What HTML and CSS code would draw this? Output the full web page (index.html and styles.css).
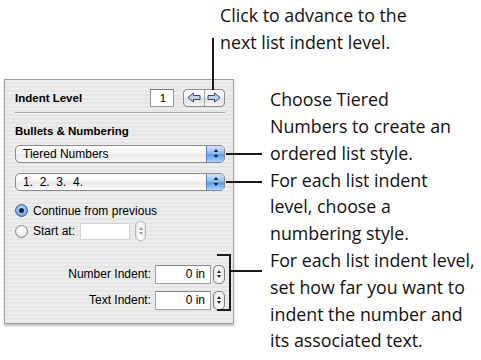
FILE: index.html
```html
<!DOCTYPE html>
<html>
<head>
<meta charset="utf-8">
<link rel="stylesheet" href="styles.css">
</head>
<body>
<div class="page">
  <p class="callout top-callout">Click to advance to the<br>next list indent level.</p>
  <div class="main">
    <div class="panel">
      <div class="row indent-row">
        <span class="bold-label">Indent Level</span>
        <span class="num-field">1</span>
        <span class="seg">
          <span class="seg-btn">
            <svg width="14" height="11" viewBox="0 0 14 11"><path d="M1 5.5 L6.5 1 L6.5 3.5 L13 3.5 L13 7.5 L6.5 7.5 L6.5 10 Z" fill="#b9d3f0" stroke="#3f4a5c" stroke-width="1" stroke-linejoin="round"/></svg>
          </span>
          <span class="seg-btn">
            <svg width="14" height="11" viewBox="0 0 14 11"><path d="M13 5.5 L7.5 1 L7.5 3.5 L1 3.5 L1 7.5 L7.5 7.5 L7.5 10 Z" fill="#b9d3f0" stroke="#3f4a5c" stroke-width="1" stroke-linejoin="round"/></svg>
          </span>
        </span>
      </div>
      <div class="divider"></div>
      <div class="bold-label section-title">Bullets &amp; Numbering</div>
      <div class="popup">
        <span class="popup-text">Tiered Numbers</span>
        <span class="popup-arrows"><svg width="8" height="11" viewBox="0 0 8 11"><path d="M4 1 L6.5 4 L1.5 4 Z M4 10 L6.5 7 L1.5 7 Z" fill="#1c2838"/></svg></span>
      </div>
      <div class="popup popup-second">
        <span class="popup-text">1.&nbsp; 2.&nbsp; 3.&nbsp; 4.</span>
        <span class="popup-arrows"><svg width="8" height="11" viewBox="0 0 8 11"><path d="M4 1 L6.5 4 L1.5 4 Z M4 10 L6.5 7 L1.5 7 Z" fill="#1c2838"/></svg></span>
      </div>
      <div class="radio-row first-radio">
        <span class="radio on"><span class="dot"></span></span>
        <span class="label">Continue from previous</span>
      </div>
      <div class="radio-row second-radio">
        <span class="radio"></span>
        <span class="label">Start at:</span>
        <span class="field start-field"></span>
        <span class="stepper disabled"><svg width="6" height="12" viewBox="0 0 6 12"><path d="M3 2 L5 5 L1 5 Z M3 10 L5 7 L1 7 Z" fill="#9a9a9a"/></svg></span>
      </div>
      <div class="indent-grid">
        <span class="label right">Number Indent:</span>
        <span class="field value-field">0 in</span>
        <span class="stepper"><svg width="6" height="12" viewBox="0 0 6 12"><path d="M3 2 L5 5 L1 5 Z M3 10 L5 7 L1 7 Z" fill="#222"/></svg></span>
        <span class="label right">Text Indent:</span>
        <span class="field value-field">0 in</span>
        <span class="stepper"><svg width="6" height="12" viewBox="0 0 6 12"><path d="M3 2 L5 5 L1 5 Z M3 10 L5 7 L1 7 Z" fill="#222"/></svg></span>
      </div>
    </div>
    <div class="notes">
      <p class="callout">Choose Tiered<br>Numbers to create an<br>ordered list style.</p>
      <p class="callout">For each list indent<br>level, choose a<br>numbering style.</p>
      <p class="callout">For each list indent level,<br>set how far you want to<br>indent the number and<br>its associated text.</p>
    </div>
  </div>
  <span class="leader v-top"></span>
  <span class="leader h-one"></span>
  <span class="leader h-two"></span>
  <span class="bracket"></span>
  <span class="leader h-three"></span>
</div>
</body>
</html>
```
FILE: styles.css
```css
html, body {
  margin: 0;
  padding: 0;
  background: #ffffff;
}
.page {
  position: relative;
  width: 481px;
  height: 360px;
  overflow: hidden;
}
.callout {
  margin: 0;
  font-family: "Open Sans", "Liberation Sans", sans-serif;
  font-size: 17.8px;
  line-height: 26.8px;
  color: #111;
}
.top-callout {
  padding: 2px 0 0 220px;
}
.main {
  display: flex;
  align-items: flex-start;
  margin-top: 23px;
}
.panel {
  box-sizing: border-box;
  width: 230px;
  margin-left: 4px;
  padding: 9px 8px 13px 10px;
  border: 1px solid #a2a2a2;
  background: repeating-linear-gradient(to bottom, #ececec 0, #ececec 2px, #e5e5e5 2px, #e5e5e5 4px);
  box-shadow: 0 2px 2px rgba(0,0,0,0.25);
  font-family: "Liberation Sans", Arial, sans-serif;
  font-size: 12px;
  color: #000;
}
.notes {
  margin-left: 36px;
  padding-top: 7.7px;
}
.row {
  display: flex;
  align-items: center;
}
.bold-label {
  font-weight: bold;
  font-size: 11.5px;
}
.indent-row {
  height: 18px;
}
.indent-row .bold-label {
  flex: 1;
}
.num-field {
  box-sizing: border-box;
  width: 24px;
  height: 18px;
  background: #fff;
  border: 1px solid #9a9a9a;
  border-top-color: #777;
  font-size: 11.5px;
  line-height: 16px;
  text-align: center;
  padding-left: 2px;
}
.seg {
  display: flex;
  margin-left: 9px;
  box-sizing: border-box;
  width: 42px;
  height: 18px;
  border: 1px solid #8c8c8c;
  border-radius: 4px;
  background: linear-gradient(to bottom, #ffffff 0%, #f2f2f2 50%, #dedede 51%, #f4f4f4 100%);
  overflow: hidden;
}
.seg-btn {
  flex: 1;
  display: flex;
  align-items: center;
  justify-content: center;
}
.seg-btn + .seg-btn {
  border-left: 1px solid #a8a8a8;
}
.divider {
  height: 1px;
  background: #a9a9a9;
  border-bottom: 1px solid #f6f6f6;
  margin: 5px 0 0 0;
}
.section-title {
  margin-top: 10px;
  line-height: 14px;
}
.popup {
  display: flex;
  box-sizing: border-box;
  height: 18px;
  margin-top: 7px;
  border: 1px solid #8a8a8a;
  border-radius: 5px;
  background: linear-gradient(to bottom, #ffffff 0%, #f6f6f6 45%, #e8e8e8 55%, #fbfbfb 100%);
  overflow: hidden;
}
.popup-second {
  margin-top: 10px;
}
.popup-text {
  flex: 1;
  padding-left: 7px;
  line-height: 16px;
}
.popup-arrows {
  width: 17px;
  display: flex;
  align-items: center;
  justify-content: center;
  border-left: 1px solid #5c83b4;
  background: linear-gradient(to bottom, #cfe4fa 0%, #8ebef0 45%, #5b9ae6 55%, #a9d4fb 100%);
}
.radio-row {
  display: flex;
  align-items: center;
}
.first-radio {
  margin-top: 13px;
  height: 14px;
}
.second-radio {
  margin-top: 3px;
  height: 21px;
}
.radio {
  box-sizing: border-box;
  width: 13px;
  height: 13px;
  border-radius: 50%;
  border: 1px solid #8a8a8a;
  background: radial-gradient(circle at 50% 35%, #ffffff 0%, #f0f0f0 50%, #cfcfcf 100%);
  display: flex;
  align-items: center;
  justify-content: center;
  margin-right: 5px;
}
.radio.on {
  border-color: #3a5f93;
  background: radial-gradient(circle at 50% 40%, #d2e6fb 0%, #7fb3ec 55%, #4c86cf 100%);
}
.dot {
  width: 5px;
  height: 5px;
  border-radius: 50%;
  background: #15253d;
}
.label {
  white-space: nowrap;
}
.field {
  box-sizing: border-box;
  background: #fff;
  border: 1px solid #a4a4a4;
  border-top-color: #858585;
  height: 18px;
}
.start-field {
  width: 50px;
  height: 17px;
  margin-left: 5px;
  border-color: #d4d4d4;
}
.stepper {
  box-sizing: border-box;
  width: 12px;
  height: 19px;
  border: 1px solid #7e7e7e;
  border-radius: 5px;
  background: linear-gradient(to right, #e6e6e6, #ffffff 50%, #e6e6e6);
  display: flex;
  align-items: center;
  justify-content: center;
}
.stepper.disabled {
  margin-left: 5px;
  width: 11px;
  height: 20px;
  border-color: #b8b8b8;
}
.indent-grid {
  display: grid;
  grid-template-columns: 1fr 56px 12px;
  column-gap: 2px;
  row-gap: 7px;
  align-items: center;
  margin-top: 23px;
  padding-right: 0;
}
.label.right {
  text-align: right;
  padding-right: 2px;
}
.value-field {
  height: 19px;
  text-align: right;
  padding-right: 5px;
  line-height: 17px;
}
.leader {
  position: absolute;
  background: #1a1a1a;
}
.v-top {
  left: 212px;
  top: 38px;
  width: 2px;
  height: 52px;
}
.h-one {
  left: 226px;
  top: 153px;
  width: 36px;
  height: 2px;
}
.h-two {
  left: 226px;
  top: 181px;
  width: 36px;
  height: 2px;
}
.bracket {
  position: absolute;
  box-sizing: border-box;
  left: 217px;
  top: 254px;
  width: 14px;
  height: 57px;
  border: 2px solid #1a1a1a;
  border-left: none;
}
.h-three {
  left: 231px;
  top: 270px;
  width: 31px;
  height: 2px;
}
```
